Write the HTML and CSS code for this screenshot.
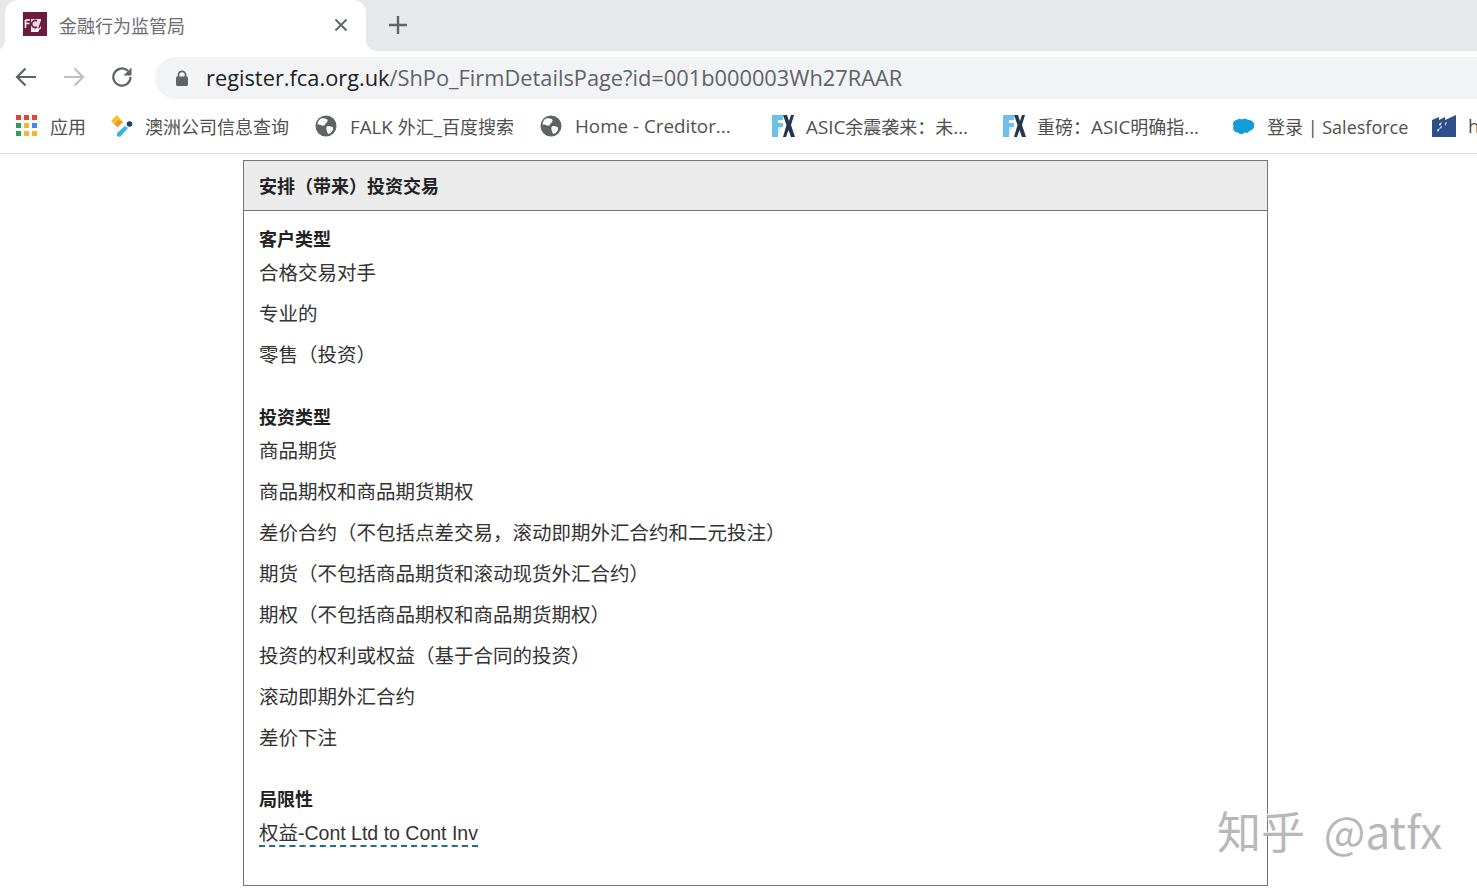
FILE: index.html
```html
<!DOCTYPE html>
<html lang="zh-CN">
<head>
<meta charset="utf-8">
<title>金融行为监管局</title>
<link rel="stylesheet" href="styles.css">
</head>
<body>
<div class="chrome">
  <div class="tabstrip">
    <div class="tab">
      <svg class="favicon" viewBox="0 0 24 24"><rect width="24" height="24" fill="#6d1a3f"/><path d="M8 7h10v10H8z" fill="#e8d9df"/><path d="M2.500 8h4.500M2.500 8v8M2.500 11.500h4" stroke="#fff" stroke-width="1.600" fill="none"/><path d="M8 17h9l-2 3H8z" fill="#fff"/><path d="M16 16l2.500-7 2.500 7M17 13.500h3" stroke="#6d1a3f" stroke-width="1.400" fill="none"/><path d="M14 9a3.500 3.500 0 1 0 0 6" stroke="#6d1a3f" stroke-width="1.500" fill="none"/></svg>
      <span class="tab-title">金融行为监管局</span>
      <svg class="tab-close" viewBox="0 0 14 14"><path d="M1.500 1.500l11 11M12.500 1.500l-11 11" stroke="#5f6368" stroke-width="1.900"/></svg>
    </div>
    <svg class="newtab" viewBox="0 0 20 20"><path d="M10 1v18M1 10h18" stroke="#5f6368" stroke-width="2.400"/></svg>
  </div>
  <div class="toolbar">
    <svg class="nav nav-back" viewBox="0 0 24 24"><path d="M22 12H3M11.500 3.500L3 12l8.500 8.500" stroke="#5f6368" stroke-width="2.200" fill="none"/></svg>
    <svg class="nav nav-fwd" viewBox="0 0 24 24"><path d="M2 12h19M12.500 3.500L21 12l-8.500 8.500" stroke="#bdc1c6" stroke-width="2.200" fill="none"/></svg>
    <svg class="nav nav-reload" viewBox="0 0 24 24"><path d="M20.500 12a8.600 8.600 0 1 1-2.600-6.100" stroke="#5f6368" stroke-width="2.200" fill="none"/><path d="M21.500 2.500v8h-8z" fill="#5f6368"/></svg>
    <div class="omnibox">
      <svg class="lock" viewBox="0 0 14 16"><path d="M3.500 7V4.800a3.500 3.500 0 0 1 7 0V7" stroke="#5f6368" stroke-width="1.700" fill="none"/><rect x="1" y="6.500" width="12" height="9.500" rx="1.400" fill="#5f6368"/></svg>
      <span class="url"><span class="url-host">register.fca.org.uk</span>/ShPo_FirmDetailsPage?id=001b000003Wh27RAAR</span>
    </div>
  </div>
  <div class="bookmarks">
    <div class="bm bm-apps">
      <div class="apps">
        <i class="d r"></i><i class="d r"></i><i class="d r"></i>
        <i class="d g"></i><i class="d y"></i><i class="d b"></i>
        <i class="d g"></i><i class="d y"></i><i class="d y"></i>
      </div>
      <span>应用</span>
    </div>
    <div class="bm bm-aus">
      <svg class="bm-icon" viewBox="0 0 24 24"><path d="M1 7l6-6 6 7-6 5z" fill="#f4c22e"/><path d="M4.500 10l4-4 4.500 2-5 5z" fill="#ea9a33"/><path d="M7 19l8-7 3 2-8 9-3-1z" fill="#35b3e4"/><circle cx="19.500" cy="10" r="2.800" fill="#1f3f66"/></svg>
      <span>澳洲公司信息查询</span>
    </div>
    <div class="bm bm-falk">
      <svg class="bm-icon globe" viewBox="0 0 22 22"><circle cx="11" cy="11" r="10.500" fill="#5f6368"/><path d="M6 3.500c3-.8 6 0 6.500 1.500.5 2-2 3-2.500 4.500-.4 1.500-3 1.500-4 .5-1-1-3.500-.5-3.500-.5 0-2.500 1.500-5 3.500-6zM13 11c2 0 3.500.5 5 1.500.5 2.500-1.500 5.500-4.500 6.500-1.500-1-1.500-3-2-4.500-.4-1.500 0-3.500 1.500-3.500z" fill="#fff"/></svg>
      <span><span class="lat">FALK </span>外汇<span class="lat">_</span>百度搜索</span>
    </div>
    <div class="bm bm-home">
      <svg class="bm-icon globe" viewBox="0 0 22 22"><circle cx="11" cy="11" r="10.500" fill="#5f6368"/><path d="M6 3.500c3-.8 6 0 6.500 1.500.5 2-2 3-2.500 4.500-.4 1.500-3 1.500-4 .5-1-1-3.500-.5-3.500-.5 0-2.500 1.500-5 3.500-6zM13 11c2 0 3.500.5 5 1.500.5 2.500-1.500 5.500-4.500 6.500-1.500-1-1.500-3-2-4.500-.4-1.500 0-3.500 1.500-3.500z" fill="#fff"/></svg>
      <span class="lat">Home - Creditor...</span>
    </div>
    <div class="bm bm-asic1">
      <svg class="bm-icon" viewBox="0 0 24 24"><path d="M1 1h11v5H7v3h5v4H7v10H1z" fill="#6cc0ea"/><path d="M7 13h4l-4 7z" fill="#cfeaf8"/><path d="M12 1h4l2 6 2-6h3l-3 10 4 12h-4l-2.500-7-2.500 7h-3l3.500-12z" fill="#22384c"/></svg>
      <span><span class="lat">ASIC</span>余震袭来：未<span class="lat">...</span></span>
    </div>
    <div class="bm bm-asic2">
      <svg class="bm-icon" viewBox="0 0 24 24"><path d="M1 1h11v5H7v3h5v4H7v10H1z" fill="#6cc0ea"/><path d="M7 13h4l-4 7z" fill="#cfeaf8"/><path d="M12 1h4l2 6 2-6h3l-3 10 4 12h-4l-2.500-7-2.500 7h-3l3.500-12z" fill="#22384c"/></svg>
      <span>重磅：<span class="lat">ASIC</span>明确指<span class="lat">...</span></span>
    </div>
    <div class="bm bm-sf">
      <svg class="bm-icon cloud" viewBox="0 0 24 16"><path d="M6 2a4 4 0 0 1 5-.5A4.500 4.500 0 0 1 17 2a5.500 5.500 0 0 1 1.500 11 4 4 0 0 1-5 1.500 4 4 0 0 1-6.500 0A4.500 4.500 0 0 1 2.500 8 4 4 0 0 1 6 2z" fill="#149cd8"/></svg>
      <span>登录<span class="lat sf"> | Salesforce</span></span>
    </div>
    <div class="bm bm-h">
      <svg class="bm-icon" viewBox="0 0 24 22"><path d="M0 5l7-3v3l6-3v3l11-5v22H0z" fill="#2f4f8c"/><path d="M7 9l3-2-2 4zM5 15l3-2-2 4zM13 8l2-1-2 4zM8 12l2-1-1 3z" fill="#fff"/></svg>
      <span class="lat">h</span>
    </div>
  </div>
</div>

<main class="page">
  <section class="panel">
    <h2 class="panel-title">安排（带来）投资交易</h2>
    <div class="panel-body">
      <div class="group">
        <h3 class="group-title">客户类型</h3>
        <p class="item">合格交易对手</p>
        <p class="item">专业的</p>
        <p class="item">零售（投资）</p>
      </div>
      <div class="group">
        <h3 class="group-title">投资类型</h3>
        <p class="item">商品期货</p>
        <p class="item">商品期权和商品期货期权</p>
        <p class="item">差价合约（不包括点差交易，滚动即期外汇合约和二元投注）</p>
        <p class="item">期货（不包括商品期货和滚动现货外汇合约）</p>
        <p class="item">期权（不包括商品期权和商品期货期权）</p>
        <p class="item">投资的权利或权益（基于合同的投资）</p>
        <p class="item">滚动即期外汇合约</p>
        <p class="item">差价下注</p>
      </div>
      <div class="group">
        <h3 class="group-title">局限性</h3>
        <p class="item"><span class="limit">权益-Cont Ltd to Cont Inv</span></p>
      </div>
    </div>
  </section>
</main>
<div class="watermark">知乎 @atfx</div>
</body>
</html>
```

FILE: styles.css
```css
* { box-sizing: border-box; }
html, body { margin: 0; padding: 0; }
body {
  width: 1477px;
  height: 890px;
  overflow: hidden;
  background: #fff;
  position: relative;
  font-family: "Liberation Sans", "Noto Sans CJK SC", sans-serif;
  color: #222;
}
.chrome { height: 154px; border-bottom: 1px solid #dadce0; background: #fff; }
.tabstrip {
  height: 51px;
  background: #e6e8eb;
  display: flex;
  align-items: flex-start;
  padding-left: 5px;
}
.tab {
  position: relative;
  width: 361px;
  height: 51px;
  background: #fff;
  border-radius: 13px 13px 0 0;
  display: flex;
  align-items: center;
  padding: 0 17px 0 18px;
}
.tab::before,
.tab::after {
  content: "";
  position: absolute;
  bottom: 0;
  width: 10px;
  height: 10px;
}
.tab::before {
  left: -10px;
  background: radial-gradient(circle at 0 0, transparent 9.500px, #fff 10px);
}
.tab::after {
  right: -10px;
  background: radial-gradient(circle at 100% 0, transparent 9.500px, #fff 10px);
}
.favicon { width: 24px; height: 24px; flex: none; margin-top: -3px; }
.tab-title {
  flex: 1;
  margin-left: 12px;
  margin-top: -2px;
  font: 18px/24px "Noto Sans CJK SC", sans-serif;
  color: #6a6e73;
}
.tab-close { width: 14px; height: 14px; flex: none; margin-top: -2px; margin-right: 1px; }
.newtab { width: 20px; height: 20px; margin: 15px 0 0 22px; flex: none; }
.toolbar { height: 50px; display: flex; align-items: center; padding-left: 14px; }
.nav { width: 24px; height: 24px; flex: none; margin-top: 2px; }
.nav-fwd { margin-left: 24px; }
.nav-reload { margin-left: 24px; }
.omnibox {
  width: 1322px;
  height: 42px;
  margin-left: 21px;
  margin-top: 4px;
  background: #f1f3f4;
  border-radius: 21px 0 0 21px;
  display: flex;
  align-items: center;
  padding-left: 20px;
}
.lock { width: 14px; height: 16px; flex: none; }
.url {
  margin-left: 17px;
  font: 21.800px/30px "Open Sans", sans-serif;
  color: #5f6368;
  white-space: nowrap;
}
.url-host { color: #202124; }
.bookmarks {
  height: 52px;
  padding-bottom: 2px;
  display: flex;
  align-items: center;
  overflow: hidden;
  white-space: nowrap;
}
.bm {
  display: flex;
  align-items: center;
  flex: none;
  font: 18px/26px "Noto Sans CJK SC", sans-serif;
  color: #505050;
}
.lat { font-family: "Open Sans", sans-serif; font-size: 18.800px; }
.sf { font-size: 18px; }
.bm-icon { width: 24px; height: 24px; flex: none; margin-top: -1px; }
.cloud { margin-left: -2px; }
.bm-apps { margin-left: 16px; width: 94px; }
.apps {
  width: 21px;
  height: 21px;
  display: grid;
  grid-template-columns: repeat(3, 5px);
  gap: 3px;
  margin-right: 13px;
  margin-top: -2px;
}
.d { display: block; width: 5px; height: 5px; }
.r { background: #e0453a; }
.g { background: #2f9e5b; }
.y { background: #f2b632; }
.b { background: #4285f4; }
.bm-aus { width: 205px; }
.bm-aus span { margin-left: 11px; }
.bm-falk { width: 225px; }
.bm-falk > span, .bm-home > span { margin-left: 13px; }
.globe { width: 22px; height: 22px; }
.bm-home { width: 231px; }
.bm-asic1 { width: 231px; }
.bm-asic1 > span { margin-left: 11px; }
.bm-asic2 { width: 231px; }
.bm-asic2 > span { margin-left: 11px; }
.bm-sf { width: 199px; }
.bm-sf > span { margin-left: 12px; }
.bm-h > span { margin-left: 12px; }

.page { padding: 6px 0 0 243px; }
.panel {
  width: 1025px;
  height: 726px;
  border: 1px solid #757575;
}
.panel-title {
  margin: 0;
  height: 50px;
  padding-left: 15px;
  background: #ebebeb;
  border-bottom: 1px solid #757575;
  font: bold 18px/49px "Noto Sans CJK SC", sans-serif;
  color: #222;
}
.panel-body { padding: 14px 15px 0; }
.group { margin-bottom: 33px; }
.group:first-child { margin-bottom: 34px; }
.group-title {
  margin: 0 0 8px;
  font: bold 18px/26px "Noto Sans CJK SC", sans-serif;
  color: #222;
}
.item {
  margin: 0 0 13px;
  font: 19.500px/28px "Liberation Sans", "Noto Sans CJK SC", sans-serif;
  color: #333;
}
.limit { border-bottom: 2px dashed #1d6f86; display: inline-block; line-height: 23px; }
.watermark {
  position: absolute;
  left: 1217px;
  top: 800px;
  font: 44px/60px "Noto Sans CJK SC", sans-serif;
  word-spacing: 9px;
  color: rgba(165,165,165,0.8);
  text-shadow: -1px -1px 0 rgba(255,255,255,.9);
  white-space: nowrap;
}
```
